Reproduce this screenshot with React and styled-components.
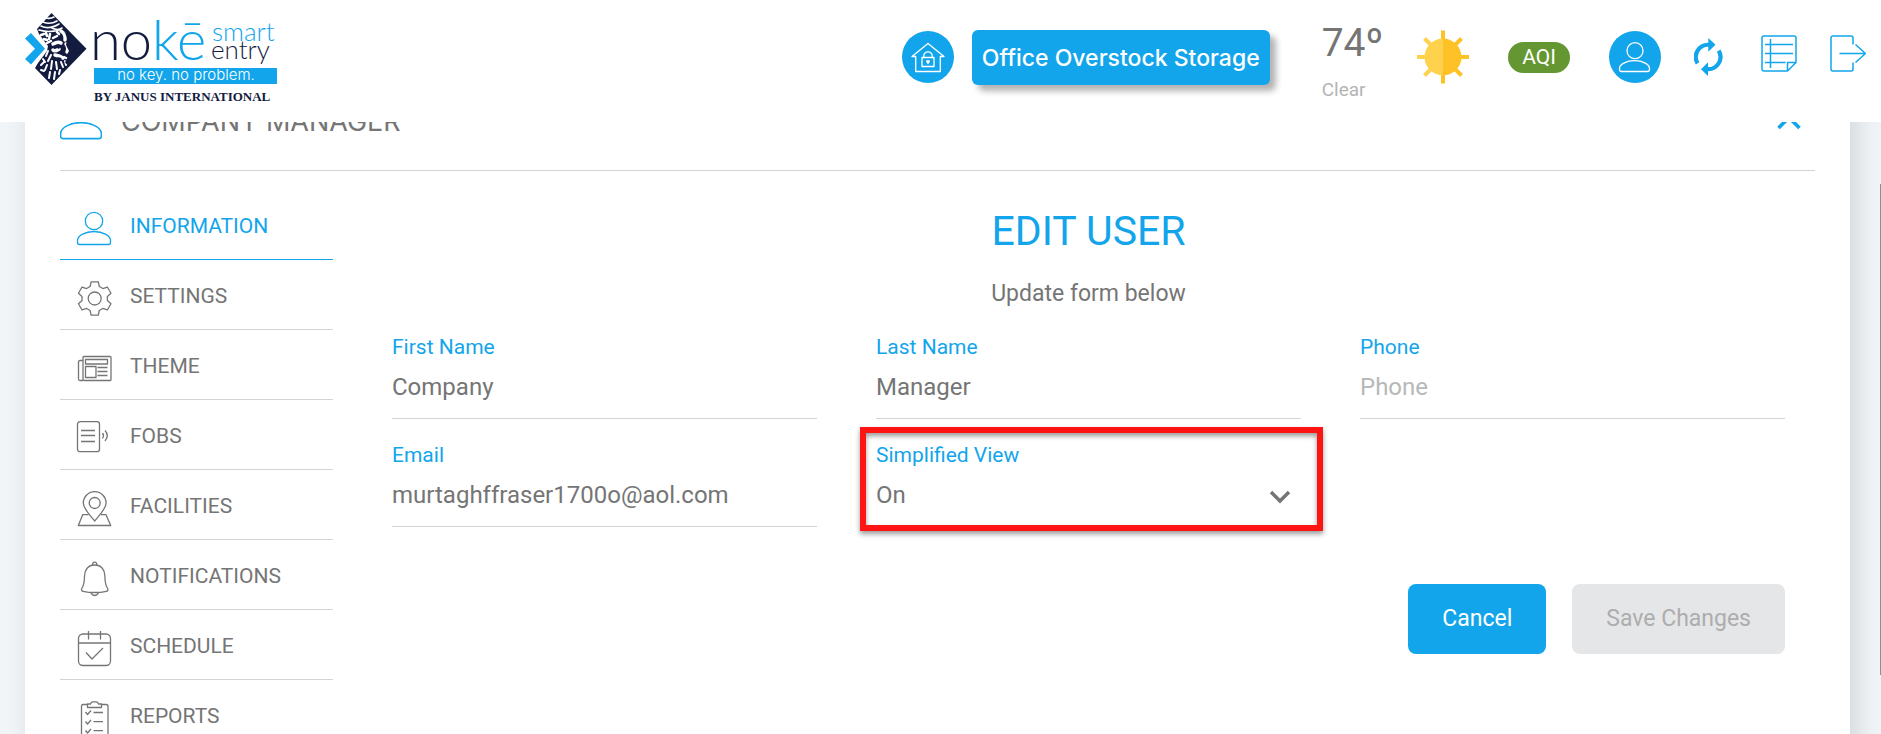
import { useState } from "react";
import styled, { createGlobalStyle, css } from "styled-components";

const blue = "#12a5eb";
const grey = "#757575";
const navy = "#131c3f";
const line = "#d2d3d5";

const GlobalStyle = createGlobalStyle`
  * {
    box-sizing: border-box;
  }

  body {
    margin: 0;
    background-color: #f1f5f8;
    color: ${grey};
    font-family: Roboto, "Liberation Sans", sans-serif;
  }
`;

const Page = styled.div`
  position: relative;
  display: flex;
  flex-direction: column;
  height: 100vh;
  overflow: hidden;
`;

const Header = styled.header`
  position: relative;
  z-index: 1;
  display: flex;
  align-items: center;
  justify-content: space-between;
  flex: none;
  padding: 8px 15px 16px 24px;
  background-color: white;
`;

const LogoImage = styled.svg`
  display: block;
  width: 256px;
  height: 98px;
  overflow: visible;
`;

const HeaderTools = styled.div`
  display: flex;
  align-items: center;
  gap: 39px;
`;

const ToolGroup = styled.div`
  display: flex;
  align-items: center;
  gap: ${(props) => props.$gap}px;
`;

const SiteGroup = styled(ToolGroup)`
  margin-right: 13px;
`;

const IconButton = styled.button`
  display: flex;
  padding: 0;
  border: none;
  background: none;
  color: ${blue};
  cursor: pointer;
`;

const RoundButton = styled(IconButton)`
  border-radius: 50%;
  background-color: ${blue};
  color: white;
`;

const SiteButton = styled.button`
  padding: 13px 10px 12px;
  border: none;
  border-radius: 6px;
  background-color: ${blue};
  box-shadow: 6px 6px 6px rgba(0, 0, 0, 0.3);
  color: white;
  font-family: Inter, Roboto, sans-serif;
  font-size: 23px;
  font-weight: 500;
  line-height: 30px;
  white-space: nowrap;
  cursor: pointer;
`;

const Weather = styled.div`
  display: flex;
  flex-direction: column;
  gap: 12px;
  padding-top: 8px;
`;

const Temperature = styled.span`
  font-size: 39px;
  line-height: 46px;
`;

const Condition = styled.span`
  color: #b4b4b4;
  font-size: 19px;
  line-height: 24px;
`;

const AirQuality = styled.span`
  padding: 3px 14px 4px;
  border-radius: 16px;
  background-color: #649632;
  color: white;
  font-size: 21px;
  line-height: 24px;
`;

const Main = styled.main`
  flex: 1;
  min-height: 0;
  overflow: hidden;
  padding: 0 31px 0 25px;
`;

/* the card is scrolled a little way under the header */
const Card = styled.section`
  min-height: 100vh;
  margin-top: -49px;
  padding: 0 35px;
  background-color: white;
  box-shadow: 7px 0 26px rgba(0, 0, 0, 0.13);
`;

const CardTitle = styled.div`
  display: flex;
  align-items: center;
  gap: 19px;
  padding: 28px 14px 27px 0;
  border-bottom: 1px solid ${line};

  h2 {
    flex: 1;
    margin: 0;
    font-family: Inter, Roboto, sans-serif;
    font-size: 27px;
    font-weight: 400;
    line-height: 42px;
  }
`;

const CardBody = styled.div`
  display: grid;
  grid-template-columns: 273px 1fr;
  gap: 59px;
  padding-top: 19px;
`;

const Menu = styled.nav`
  display: flex;
  flex-direction: column;
`;

const MenuLink = styled.a`
  display: flex;
  align-items: center;
  gap: 18px;
  height: 70px;
  padding: 2px 0 0 16px;
  border-bottom: 1px solid ${line};
  color: ${grey};
  font-size: 21px;
  text-decoration: none;

  svg {
    margin-top: 6px;
  }

  ${(props) =>
    props.$active &&
    css`
      border-color: ${blue};
      color: ${blue};
    `}
`;

const Form = styled.form`
  padding: 17px 30px 0 0;
`;

const FormTitle = styled.h1`
  margin: 0;
  color: ${blue};
  font-size: 41px;
  font-weight: 400;
  line-height: 48px;
  text-align: center;
`;

const FormText = styled.p`
  margin: 24px 0 26px;
  font-size: 23px;
  line-height: 30px;
  text-align: center;
`;

const Fields = styled.div`
  display: grid;
  grid-template-columns: repeat(3, 1fr);
  gap: 24px 59px;
`;

const FieldBox = styled.div`
  position: relative;
  display: flex;
  flex-direction: column;
`;

const Label = styled.label`
  color: ${blue};
  font-size: 21px;
  line-height: 24px;
`;

const control = css`
  width: 100%;
  height: 60px;
  padding: 0 0 4px;
  border: none;
  border-bottom: 1px solid ${line};
  border-radius: 0;
  outline: none;
  background: none;
  color: ${grey};
  font-family: inherit;
  font-size: 24px;
`;

const Input = styled.input`
  ${control}

  &::placeholder {
    color: #b8b8b8;
    opacity: 1;
  }
`;

const Select = styled.select`
  ${control}
  appearance: none;
`;

const SelectArrow = styled.svg`
  position: absolute;
  right: 9px;
  bottom: 22px;
  pointer-events: none;
`;

const Highlight = styled.div`
  position: absolute;
  inset: -16px -22px -4px -16px;
  border: 6px solid #ff1414;
  box-shadow: 0 3px 5px rgba(0, 0, 0, 0.4), inset 0 3px 5px rgba(0, 0, 0, 0.4);
  pointer-events: none;
`;

const FormButtons = styled.div`
  display: flex;
  justify-content: flex-end;
  gap: 26px;
  margin-top: 57px;
`;

const Button = styled.button`
  padding: 21px 34px;
  border: none;
  border-radius: 8px;
  background-color: ${blue};
  color: white;
  font-family: inherit;
  font-size: 23px;
  line-height: 28px;
  cursor: pointer;

  &:disabled {
    background-color: #e5e6e8;
    color: #adadad;
    cursor: default;
  }
`;

const ScrollThumb = styled.div`
  position: absolute;
  top: 25%;
  right: 0;
  width: 1px;
  height: 67%;
  background-color: #8e9294;
`;

function Logo() {
  return (
    <LogoImage viewBox="24 8 256 98" role="img" aria-label="Noke smart entry">
      <path fill={blue} d="M25 38.5l6-5.5 14 15.7-14 15.8-6-5.5 10-10.3z" />
      <path fill={navy} d="M51.5 13L86.500 48.700 51.500 85 35 68l3-5 9-12 1-5-9-12-2-5z" />
      <g fill="none" stroke="white" strokeLinecap="round">
        <path strokeWidth="1.600" d="M43 22q7 3 14-1M41 26q8 4 18-2M46 18q4 1 8-1M39 30q10 3 20 0M52 28q6 3 10 0" />
        <path strokeWidth="2.500" d="M41 35l3-1M46 33l1 3M44 39l3 1M50 34l-1 5M47 43l4-2M53 38l4-2M57 32l2 2" />
        <path strokeWidth="3.500" d="M61 31q5 3 4 9M53 44q5-3 8-1M66 44q3 4 1 8M59 49q-4 3-6 1M55 55q5 1 8 3" />
        <path strokeWidth="2" d="M48 51l-2 5M51 55l-3 6M43 59l2 3M41 65l3-3M47 65l-2 5M52 61l-1 8M56 62l1 7M61 62l2 5M65 61l1 4M50 72l-1 6M55 72l-1 7M60 70l-1 4M41 70l3 1M64 57l4 2" />
      </g>
      <path fill={navy} d="M63 30L82 49 67 64q-3-1-1-4 2-2 1-5l2-4-3-6 1-5q0-5-4-10zM55 47l6-1-2 3zM57 57l5 1-3 2z" />
      <g fontFamily="Lato" fontWeight="300">
        <text x="90" y="60" fontSize="56" fill={navy}>
          no<tspan fill={blue}>kē</tspan>
        </text>
        <text x="212" y="41" fontSize="26" fill={blue}>smart</text>
        <text x="211" y="59" fontSize="26" fill={navy}>entry</text>
      </g>
      <text x="199" y="60" fontSize="5" fontFamily="Lato" fill={blue}>™</text>
      <rect x="94" y="68" width="183" height="16" fill={blue} />
      <text x="186" y="80" fontSize="15" fontFamily="Inter" fontWeight="300" fill="white" textAnchor="middle">
        no key. no problem.
      </text>
      <text x="94" y="101" fontSize="13" fontFamily="Liberation Serif" fontWeight="700" fill={navy}>
        BY JANUS INTERNATIONAL
      </text>
    </LogoImage>
  );
}

function Icon({ width = 36, height = 36, viewBox, stroke = 1.3, children }) {
  return (
    <svg
      width={width}
      height={height}
      viewBox={viewBox || `0 0 ${width} ${height}`}
      fill="none"
      stroke="currentColor"
      strokeWidth={stroke}
      strokeLinejoin="round"
      aria-hidden="true"
    >
      {children}
    </svg>
  );
}

function PersonShape() {
  return (
    <>
      <circle cx="18" cy="10" r="8.700" />
      <path d="M3.500 33.500h29q2 0 2-2v-2c0-5-8-9-16.500-9s-16.500 4-16.500 9v2q0 2 2 2z" />
    </>
  );
}

const gearTooth = [[-4.600, -12], [-3.600, -16.700], [3.600, -16.700], [4.600, -12]];
const gearPoints = [0, 60, 120, 180, 240, 300]
  .flatMap((deg) => {
    const a = (deg * Math.PI) / 180;
    return gearTooth.map(([x, y]) => [
      18.7 + x * Math.cos(a) - y * Math.sin(a),
      17.5 + x * Math.sin(a) + y * Math.cos(a),
    ]);
  })
  .join(" ");

const menuItems = [
  { name: "INFORMATION", icon: <PersonShape /> },
  {
    name: "SETTINGS",
    icon: (
      <>
        <polygon points={gearPoints} />
        <circle cx="18.700" cy="17.500" r="6.500" />
      </>
    ),
  },
  {
    name: "THEME",
    icon: (
      <>
        <rect x="7" y="5.500" width="28" height="24" rx="1" />
        <path d="M7 9.500H4q-1.500 0-1.500 1.500v17q0 1.500 1.500 1.500h3" />
        <path d="M9.500 8.500h22v4.500h-22zM9.500 15.500h10.500v11H9.500zM21.500 16.500h10M21.500 20.500h10M21.500 24.500h10" />
      </>
    ),
  },
  {
    name: "FOBS",
    icon: (
      <>
        <rect x="1.500" y="0.700" width="22" height="30" rx="2.500" />
        <path d="M5 9.500h14M5 14.500h14M5 20.500h14M26.500 12q2 2.500 0 5.500M29 9.500q4.500 5 0 10.500" />
      </>
    ),
  },
  {
    name: "FACILITIES",
    icon: (
      <>
        <path d="M18.700 30C14 24 7.300 18 7.300 12a11.400 11.400 0 0 1 22.800 0c0 6-6.700 12-11.400 18z" />
        <circle cx="18.700" cy="12" r="5.500" />
        <path d="M12.500 23.700H6.700L2.300 34.500h32.400L30 23.700h-5.300" />
      </>
    ),
  },
  {
    name: "NOTIFICATIONS",
    icon: (
      <>
        <path d="M18.700 4C12 4 8.500 9 8.500 15c0 6-.5 9-2.500 12-1 2-.5 3 1 3.300q11.700 2.400 23.400 0c1.500-.3 2-1.300 1-3.300-2-3-2.500-6-2.500-12 0-6-3.500-11-10.200-11z" />
        <path d="M16.500 4.200q0-3 2.200-3t2.200 3M15 31.500q1 3 3.700 3t3.700-3" />
      </>
    ),
  },
  {
    name: "SCHEDULE",
    icon: (
      <>
        <rect x="2.500" y="3" width="32" height="31.500" rx="4.500" />
        <path d="M2.500 12h32M12.500 0v8.500M24.500 0v8.500M10 21.500l6 6.500 11-11" />
      </>
    ),
  },
  {
    name: "REPORTS",
    icon: (
      <>
        <path d="M11.500 3.500H7q-1.500 0-1.500 1.500v33h26.500V5q0-1.500-1.500-1.500h-5" />
        <path d="M11.500 6.500v-3.500h3q.5-2 2-2.200h4q1.500.2 2 2.200h3v3.500z" />
        <path d="M9.500 11l2 2.500 3.500-4M9.500 20.500l2 2.500 3.500-4M9.500 29.500l2 2.500 3.500-4M17.500 11.500h9.500M17.500 20.700h9.500M17.500 29.700h9.500" />
      </>
    ),
  },
];

function SunIcon() {
  return (
    <svg width="52" height="54" viewBox="-26 -27 52 54" aria-hidden="true">
      <path stroke="#ffd24d" strokeWidth="4" d="M-26 0h10M-18.500-18.500l8 8M-18.500 18.500l8-8" />
      <path stroke="#ffc226" strokeWidth="4" d="M26 0H16M18.500-18.500l-8 8M18.500 18.500l-8-8M0-26.500v10M0 26.500v-10" />
      <path fill="#ffd24d" d="M0-18.500a18.500 18.500 0 0 0 0 37z" />
      <path fill="#ffc226" d="M0-18.500a18.500 18.500 0 0 1 0 37z" />
    </svg>
  );
}

function TopBar() {
  return (
    <Header>
      <Logo />
      <HeaderTools>
        <SiteGroup $gap={18}>
          <RoundButton type="button" aria-label="Home">
            <Icon width={52} height={52}>
              <path d="M26 12.500L10 25.500h3.700V40.500h24.600V25.500H42z" />
              <path d="M20 26.500h12v9H20zM21.800 26.500v-1.500a4.200 4.200 0 0 1 8.400 0v1.500" />
              <path fill="currentColor" stroke="none" d="M26 33.500l-2-3q0-1.500 1-1.500t1 .7q0-.7 1-.7t1 1.500z" />
            </Icon>
          </RoundButton>
          <SiteButton type="button">Office Overstock Storage</SiteButton>
        </SiteGroup>
        <ToolGroup $gap={34}>
          <Weather>
            <Temperature>74º</Temperature>
            <Condition>Clear</Condition>
          </Weather>
          <SunIcon />
        </ToolGroup>
        <AirQuality>AQI</AirQuality>
        <ToolGroup $gap={33}>
          <RoundButton type="button" aria-label="Account">
            <Icon width={52} height={52}>
              <circle cx="26" cy="19.700" r="8" />
              <path d="M12.500 40.500h26q2 0 2-2v-1c0-4-6.500-7.800-15-7.800s-15 3.800-15 7.800v1q0 2 2 2z" />
            </Icon>
          </RoundButton>
          <IconButton type="button" aria-label="Refresh">
            <Icon width={34} height={38} stroke={4.200}>
              <path d="M15 6.800A12.300 12.300 0 0 0 3.600 25.400M13.500 31.200A12.300 12.300 0 0 0 24.700 12.600" />
              <path fill="currentColor" stroke="none" d="M14.300 0v13.700L21.500 6.700zM14 38V24.300L7 31.300z" />
            </Icon>
          </IconButton>
          <IconButton type="button" aria-label="Activity log">
            <Icon height={44} stroke={1.500}>
              <path d="M26.500 36H3q-2 0-2-2V3q0-2 2-2h30q2 0 2 2v24.500zM26.500 36v-8.500H35" />
              <path d="M9.500 4v29M4 9.500h28M4 18.500h28M4 27.500h20.500" />
            </Icon>
          </IconButton>
          <IconButton type="button" aria-label="Log out">
            <Icon height={44} stroke={1.500}>
              <path d="M23 9.500V3q0-2-2-2H3Q1 1 1 3v31q0 2 2 2h18q2 0 2-2v-6.500M9.500 18.500h26M25.500 9.500l10 9-10 9" />
            </Icon>
          </IconButton>
        </ToolGroup>
      </HeaderTools>
    </Header>
  );
}

function Field({ id, label, ...rest }) {
  return (
    <FieldBox>
      <Label htmlFor={id}>{label}</Label>
      <Input id={id} {...rest} />
    </FieldBox>
  );
}

function EditUser() {
  const [simplified, setSimplified] = useState("On");

  return (
    <Form onSubmit={(e) => e.preventDefault()}>
      <FormTitle>EDIT USER</FormTitle>
      <FormText>Update form below</FormText>
      <Fields>
        <Field id="firstName" label="First Name" defaultValue="Company" />
        <Field id="lastName" label="Last Name" defaultValue="Manager" />
        <Field id="phone" label="Phone" type="tel" placeholder="Phone" />
        <Field id="email" label="Email" type="email" defaultValue="murtaghffraser1700o@aol.com" />
        <FieldBox>
          <Label htmlFor="simplified">Simplified View</Label>
          <Select id="simplified" value={simplified} onChange={(e) => setSimplified(e.target.value)}>
            <option>On</option>
            <option>Off</option>
          </Select>
          <SelectArrow width="24" height="16" viewBox="0 0 24 16" fill="none" stroke={grey} strokeWidth="3.500">
            <path d="M3 3l9 9 9-9" />
          </SelectArrow>
          <Highlight />
        </FieldBox>
      </Fields>
      <FormButtons>
        <Button type="button">Cancel</Button>
        <Button type="submit" disabled>Save Changes</Button>
      </FormButtons>
    </Form>
  );
}

function App() {
  return (
    <Page>
      <GlobalStyle />
      <TopBar />
      <Main>
        <Card>
          <CardTitle>
            <Icon width={42} height={42} viewBox="1 3 34 34">
              <g stroke={blue}>
                <PersonShape />
              </g>
            </Icon>
            <h2>COMPANY MANAGER</h2>
            <IconButton type="button" aria-label="Collapse">
              <Icon width={24} height={16} stroke={3.600}>
                <path d="M1.500 14L12 3.500 22.500 14" />
              </Icon>
            </IconButton>
          </CardTitle>
          <CardBody>
            <Menu>
              {menuItems.map((item) => (
                <MenuLink key={item.name} href="#" $active={item.name === "INFORMATION"}>
                  <Icon>{item.icon}</Icon>
                  {item.name}
                </MenuLink>
              ))}
            </Menu>
            <EditUser />
          </CardBody>
        </Card>
      </Main>
      <ScrollThumb />
    </Page>
  );
}

export default App;
